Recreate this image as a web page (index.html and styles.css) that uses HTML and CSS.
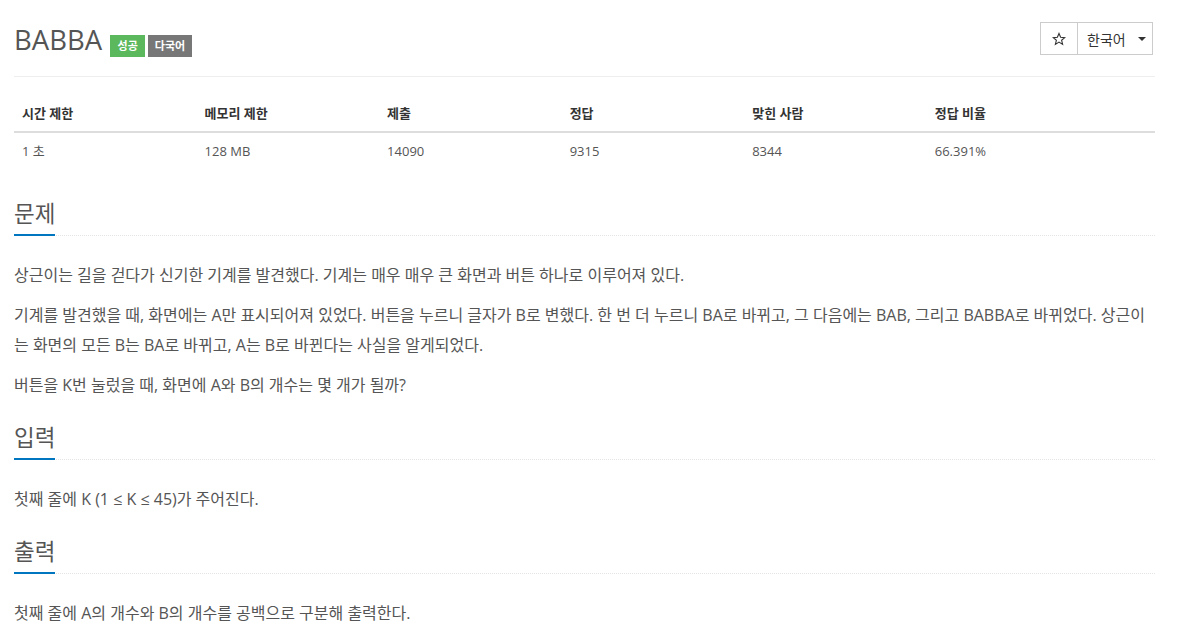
FILE: index.html
```html
<!DOCTYPE html>
<html lang="ko">
<head>
<meta charset="utf-8">
<title>BABBA</title>
<link rel="stylesheet" href="styles.css">
</head>
<body>
<div class="container">
  <div class="page-header">
    <div class="title-row">
      <h1 class="title">BABBA</h1>
      <span class="label label-success">성공</span>
      <span class="label label-default">다국어</span>
    </div>
    <div class="btn-group">
      <button class="btn btn-star" aria-label="즐겨찾기">
        <svg class="star-icon" width="14" height="14" viewBox="0 0 24 24" aria-hidden="true">
          <polygon points="12,2.5 14.8,9.1 21.9,9.6 16.5,14.2 18.2,21.2 12,17.4 5.8,21.2 7.5,14.2 2.1,9.6 9.2,9.1" fill="none" stroke="#333" stroke-width="1.9" stroke-linejoin="miter"/>
        </svg>
      </button>
      <button class="btn btn-lang">한국어 <span class="caret"></span></button>
    </div>
  </div>

  <table class="info-table">
    <thead>
      <tr>
        <th>시간 제한</th>
        <th>메모리 제한</th>
        <th>제출</th>
        <th>정답</th>
        <th>맞힌 사람</th>
        <th>정답 비율</th>
      </tr>
    </thead>
    <tbody>
      <tr>
        <td>1 초</td>
        <td>128 MB</td>
        <td>14090</td>
        <td>9315</td>
        <td>8344</td>
        <td>66.391%</td>
      </tr>
    </tbody>
  </table>

  <section class="problem-section">
    <div class="headline"><h2>문제</h2></div>
    <div class="problem-text">
      <p>상근이는 길을 걷다가 신기한 기계를 발견했다. 기계는 매우 매우 큰 화면과 버튼 하나로 이루어져 있다.</p>
      <p>기계를 발견했을 때, 화면에는 A만 표시되어져 있었다. 버튼을 누르니 글자가 B로 변했다. 한 번 더 누르니 BA로 바뀌고, 그 다음에는 BAB, 그리고 BABBA로 바뀌었다. 상근이는 화면의 모든 B는 BA로 바뀌고, A는 B로 바뀐다는 사실을 알게되었다.</p>
      <p>버튼을 K번 눌렀을 때, 화면에 A와 B의 개수는 몇 개가 될까?</p>
    </div>
  </section>

  <section class="problem-section">
    <div class="headline"><h2>입력</h2></div>
    <div class="problem-text">
      <p>첫째 줄에 K (1 ≤ K ≤ 45)가 주어진다.</p>
    </div>
  </section>

  <section class="problem-section">
    <div class="headline"><h2>출력</h2></div>
    <div class="problem-text">
      <p>첫째 줄에 A의 개수와 B의 개수를 공백으로 구분해 출력한다.</p>
    </div>
  </section>
</div>
</body>
</html>
```

FILE: styles.css
```css
html, body {
  margin: 0;
  padding: 0;
  background: #fff;
}

body {
  font-family: "Open Sans", "Noto Sans CJK KR", sans-serif;
  font-size: 14px;
  color: #555;
}

.container {
  width: 1141px;
  margin-left: 14px;
}

.page-header {
  display: flex;
  justify-content: space-between;
  align-items: flex-start;
  padding-top: 22px;
  padding-bottom: 18px;
  border-bottom: 1px solid #eee;
}

.title-row {
  display: flex;
  align-items: flex-end;
}

.title {
  margin: 0 8px 0 0;
  font-size: 27.5px;
  font-weight: 400;
  line-height: 36px;
  color: #555;
}

.label {
  display: inline-block;
  height: 22px;
  line-height: 22px;
  padding: 0 6.5px;
  font-size: 11px;
  font-weight: 700;
  color: #fff;
  margin-bottom: 1px;
}

.label-success {
  background: #5cb85c;
  margin-right: 3px;
  padding: 0 7.5px;
}

.label-default {
  background: #777;
}

.btn-group {
  display: flex;
  margin-right: 2px;
}

.btn {
  font-family: "Open Sans", "Noto Sans CJK KR", sans-serif;
  background: #fff;
  border: 1px solid #ccc;
  color: #333;
  height: 33px;
  margin: 0;
  font-size: 14px;
  display: flex;
  align-items: center;
  justify-content: center;
  box-sizing: border-box;
}

.btn-star {
  width: 38px;
  padding: 0;
}

.star-icon {
  display: block;
}

.btn-lang {
  width: 75px;
  padding: 0 0 0 9px;
  justify-content: flex-start;
  border-left: none;
}

.caret {
  display: inline-block;
  width: 0;
  height: 0;
  margin-left: 12px;
  border-top: 4px solid #333;
  border-left: 4px solid transparent;
  border-right: 4px solid transparent;
}

.info-table {
  width: 100%;
  table-layout: fixed;
  margin-top: 18px;
  margin-bottom: 30px;
  border-collapse: collapse;
  border-spacing: 0;
}

.info-table th,
.info-table td {
  box-sizing: border-box;
  padding: 8px;
  text-align: left;
  line-height: 20px;
  font-size: 13px;
}

.info-table th {
  width: 16%;
  font-weight: 700;
  color: #333;
  border-bottom: 2px solid #ddd;
}

.info-table th:last-child {
  width: auto;
}

.info-table td {
  color: #555;
}

.problem-section {
  margin-bottom: 23px;
}

.headline {
  display: flex;
  border-bottom: 1px dotted #e4e4e4;
  margin-bottom: 24px;
}

.headline h2 {
  margin: 0 0 -1px 0;
  padding-bottom: 5px;
  font-size: 22.5px;
  font-weight: 400;
  line-height: 30px;
  color: #555;
  border-bottom: 2px solid #0076c0;
}

.problem-text p {
  margin: 0 0 10px 0;
  font-size: 16px;
  line-height: 30px;
  color: #555;
}
```
